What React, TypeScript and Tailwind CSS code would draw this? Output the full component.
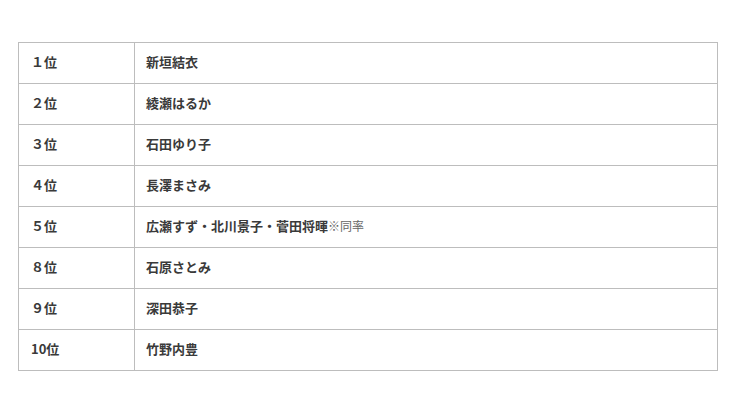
import React from "react";

const rows: [string, React.ReactNode][] = [
  ["１位", "新垣結衣"],
  ["２位", "綾瀬はるか"],
  ["３位", "石田ゆり子"],
  ["４位", "長澤まさみ"],
  [
    "５位",
    <>
      広瀬すず・北川景子・菅田将暉
      <span className="font-normal text-[12px] text-[#666]">※同率</span>
    </>,
  ],
  ["８位", "石原さとみ"],
  ["９位", "深田恭子"],
  ["10位", "竹野内豊"],
];

export default function App() {
  return (
    <div
      className="w-[740px] h-[411px] bg-white pt-[42px] pl-[18px]"
      style={{ fontFamily: '"Noto Sans CJK JP", "Noto Sans", sans-serif' }}
    >
      <table className="w-[700px] border-collapse text-[13px] font-bold text-[#3a3a3a]">
        <tbody>
          {rows.map(([rank, name], i) => (
            <tr key={i} className="h-[41px]">
              <td className="w-[116px] border border-[#bdbdbd] pl-[12px] pt-0 pb-[3px] leading-none">{rank}</td>
              <td className="border border-[#bdbdbd] pl-[11px] pt-0 pb-[3px] leading-none">{name}</td>
            </tr>
          ))}
        </tbody>
      </table>
    </div>
  );
}
